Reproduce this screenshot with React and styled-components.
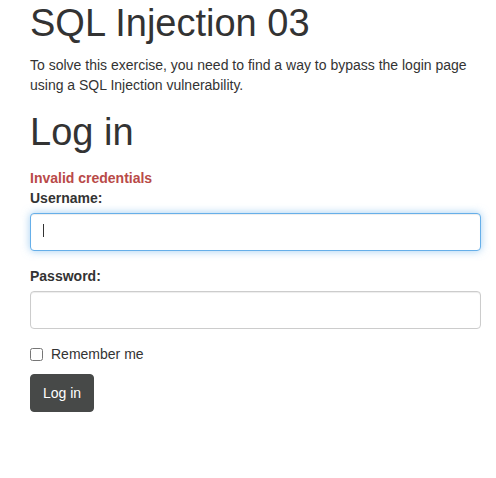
import React from 'react';
import styled, { createGlobalStyle } from 'styled-components';

const GlobalStyle = createGlobalStyle`
  body {
    margin: 0;
    background: #fff;
    font-family: "Liberation Sans", Arial, Helvetica, sans-serif;
    font-size: 14px;
    line-height: 20px;
    color: #333;
  }
  * {
    box-sizing: border-box;
  }
`;

const Page = styled.div`
  padding: 3px 15px 40px 30px;
`;

const Title = styled.h1`
  font-size: 38px;
  font-weight: 400;
  line-height: 1.1;
  margin: 0 0 10px;
  color: #333;
`;

const Intro = styled.p`
  margin: 0 0 17px;
`;

const Error = styled.div`
  color: #b94a48;
  font-weight: 700;
  margin-top: 4px;
`;

const Form = styled.form`
  display: flex;
  flex-direction: column;
`;

const FormGroup = styled.div`
  display: flex;
  flex-direction: column;
  margin-bottom: 15px;
`;

const Label = styled.label`
  font-weight: 700;
  margin-bottom: 5px;
`;

const InputWrap = styled.div`
  position: relative;
`;

const Input = styled.input`
  display: block;
  width: 100%;
  height: 38px;
  padding: 8px 12px;
  font-family: inherit;
  font-size: 14px;
  color: #555;
  background: #fff;
  border: 1px solid ${(p) => (p.$focused ? '#66afe9' : '#ccc')};
  border-radius: 4px;
  outline: none;
  box-shadow: ${(p) =>
    p.$focused
      ? 'inset 0 1px 1px rgba(0,0,0,.075), 0 0 8px rgba(102,175,233,.6)'
      : 'inset 0 1px 1px rgba(0,0,0,.075)'};
`;

const Caret = styled.span`
  position: absolute;
  left: 13px;
  top: 11px;
  width: 1px;
  height: 13px;
  background: #333;
`;

const CheckRow = styled.label`
  display: flex;
  align-items: flex-start;
  gap: 8px;
  margin-bottom: 10px;
`;

const Checkbox = styled.input`
  width: 13px;
  height: 13px;
  margin: 4px 0 0;
`;

const Button = styled.button`
  align-self: flex-start;
  padding: 8px 12px;
  font-family: inherit;
  font-size: 14px;
  line-height: 20px;
  color: #fff;
  background: #474948;
  border: 1px solid #474948;
  border-radius: 4px;
  cursor: pointer;
`;

const App = () => {
  return (
    <Page>
      <GlobalStyle />
      <Title>SQL Injection 03</Title>
      <Intro>
        To solve this exercise, you need to find a way to bypass the login page
        using a SQL Injection vulnerability.
      </Intro>
      <Title as="h2">Log in</Title>
      <Form onSubmit={(e) => e.preventDefault()}>
        <Error>Invalid credentials</Error>
        <FormGroup>
          <Label htmlFor="username">Username:</Label>
          <InputWrap>
            <Input id="username" type="text" $focused />
            <Caret />
          </InputWrap>
        </FormGroup>
        <FormGroup>
          <Label htmlFor="password">Password:</Label>
          <Input id="password" type="password" />
        </FormGroup>
        <CheckRow>
          <Checkbox type="checkbox" />
          Remember me
        </CheckRow>
        <Button type="submit">Log in</Button>
      </Form>
    </Page>
  );
};

export default App;
